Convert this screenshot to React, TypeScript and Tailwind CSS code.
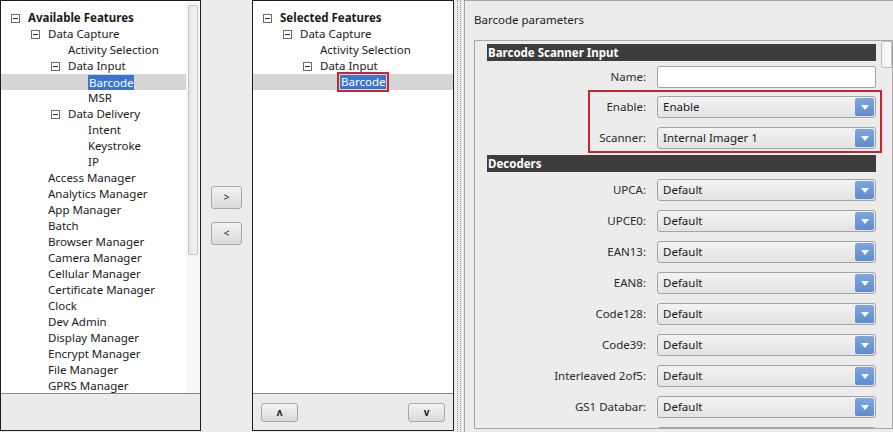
import React from 'react'

type TreeNode = {
  label: string
  level: number
  box?: boolean
  bold?: boolean
  selected?: boolean
}

const indent = ['pl-[10px]', 'pl-[30px]', 'pl-[50px]', 'pl-[70px]']

const availableNodes: TreeNode[] = [
  { label: 'Available Features', level: 0, box: true, bold: true },
  { label: 'Data Capture', level: 1, box: true },
  { label: 'Activity Selection', level: 2 },
  { label: 'Data Input', level: 2, box: true },
  { label: 'Barcode', level: 3, selected: true },
  { label: 'MSR', level: 3 },
  { label: 'Data Delivery', level: 2, box: true },
  { label: 'Intent', level: 3 },
  { label: 'Keystroke', level: 3 },
  { label: 'IP', level: 3 },
  { label: 'Access Manager', level: 1 },
  { label: 'Analytics Manager', level: 1 },
  { label: 'App Manager', level: 1 },
  { label: 'Batch', level: 1 },
  { label: 'Browser Manager', level: 1 },
  { label: 'Camera Manager', level: 1 },
  { label: 'Cellular Manager', level: 1 },
  { label: 'Certificate Manager', level: 1 },
  { label: 'Clock', level: 1 },
  { label: 'Dev Admin', level: 1 },
  { label: 'Display Manager', level: 1 },
  { label: 'Encrypt Manager', level: 1 },
  { label: 'File Manager', level: 1 },
  { label: 'GPRS Manager', level: 1 },
]

const selectedNodes: TreeNode[] = [
  { label: 'Selected Features', level: 0, box: true, bold: true },
  { label: 'Data Capture', level: 1, box: true },
  { label: 'Activity Selection', level: 2 },
  { label: 'Data Input', level: 2, box: true },
  { label: 'Barcode', level: 3, selected: true },
]

const decoders = ['UPCA', 'UPCE0', 'EAN13', 'EAN8', 'Code128', 'Code39', 'Interleaved 2of5', 'GS1 Databar']

function MinusBox() {
  return (
    <span className="w-[9px] h-[9px] mr-[8px] border border-[#6a6a6a] bg-white flex items-center justify-center shrink-0">
      <span className="w-[5px] h-px bg-[#333]" />
    </span>
  )
}

function TreeRow({ node, outlined }: { node: TreeNode; outlined?: boolean }) {
  return (
    <div className={`h-[16px] flex items-center ${indent[node.level]} ${node.selected ? 'bg-[#d6d6d6]' : ''}`}>
      {node.box ? <MinusBox /> : <span className="w-[17px] shrink-0" />}
      {node.selected ? (
        outlined ? (
          <span className="-ml-[3px] border-2 border-[#c3262e] p-px leading-none">
            <span className="bg-[#3b74cf] text-white px-px leading-[14px] block">{node.label}</span>
          </span>
        ) : (
          <span className="bg-[#3b74cf] text-white px-px leading-[15px]">{node.label}</span>
        )
      ) : (
        <span className={node.bold ? 'font-bold' : ''}>{node.label}</span>
      )}
    </div>
  )
}

function SmallButton({ children, className = '' }: { children: React.ReactNode; className?: string }) {
  return (
    <button className={`rounded-[3px] border border-[#a8a8a8] bg-gradient-to-b from-[#f3f3f3] to-[#dadada] text-[#222] flex items-center justify-center ${className}`}>
      {children}
    </button>
  )
}

function Select({ value }: { value: string }) {
  return (
    <div className="flex-1 h-[22px] border border-[#a3a3a3] rounded-[3px] bg-gradient-to-b from-[#f3f3f3] to-[#e3e3e3] flex">
      <div className="flex-1 flex items-center pl-[5px]">{value}</div>
      <div className="w-[19px] my-px mr-px rounded-[2px] bg-gradient-to-b from-[#7ea6df] to-[#5f8ccf] flex items-center justify-center">
        <span className="w-0 h-0 border-l-[4px] border-r-[4px] border-t-[5px] border-l-transparent border-r-transparent border-t-white" />
      </div>
    </div>
  )
}

function FormRow({ label, children, className = '' }: { label: string; children: React.ReactNode; className?: string }) {
  return (
    <div className={`flex items-center h-[22px] ${className}`}>
      <div className="w-[159px] mr-[11px] text-right text-[#2a2a2a]">{label ? `${label}:` : ''}</div>
      {children}
    </div>
  )
}

function SectionHeader({ title, className = '' }: { title: string; className?: string }) {
  return (
    <div className={`h-[17px] bg-[#3d3d3d] text-white font-bold leading-[17px] pl-px ${className}`}>{title}</div>
  )
}

export default function App() {
  return (
    <div
      className="w-[893px] h-[432px] bg-[#ececec] flex overflow-hidden text-[11.5px] text-[#1a1a1a]"
      style={{ fontFamily: '"Noto Sans", "DejaVu Sans", sans-serif' }}
    >
      {/* available features */}
      <div className="w-[201px] h-[431px] border border-[#1e1e1e] flex flex-col shrink-0">
        <div className="flex-1 bg-white flex overflow-hidden">
          <div className="flex-1 pt-[9px]">
            {availableNodes.map((n) => (
              <TreeRow key={n.label + n.level} node={n} />
            ))}
          </div>
          <div className="w-[14px] bg-[#f7f7f7] pt-[4px] px-[2px]">
            <div className="h-[250px] rounded-[2px] border border-[#c4c4c4] bg-gradient-to-r from-[#e6e6e6] to-[#f4f4f4]" />
          </div>
        </div>
        <div className="h-[37px] border-t border-[#8a8a8a] bg-[#ebebeb]" />
      </div>

      {/* move buttons */}
      <div className="w-[51px] shrink-0 flex flex-col items-center pt-[186px] gap-[13px]">
        <SmallButton className="w-[31px] h-[23px] text-[10px]">&gt;</SmallButton>
        <SmallButton className="w-[31px] h-[23px] text-[10px]">&lt;</SmallButton>
      </div>

      {/* selected features */}
      <div className="w-[202px] h-[431px] border border-[#1e1e1e] flex flex-col shrink-0">
        <div className="flex-1 bg-white pt-[9px] overflow-hidden">
          {selectedNodes.map((n) => (
            <TreeRow key={n.label + n.level} node={n} outlined />
          ))}
        </div>
        <div className="h-[37px] border-t border-[#8a8a8a] bg-[#ebebeb] flex justify-between items-start px-[8px] pt-[9px]">
          <SmallButton className="w-[37px] h-[19px] text-[10px] font-bold">ʌ</SmallButton>
          <SmallButton className="w-[37px] h-[19px] text-[10px] font-bold">v</SmallButton>
        </div>
      </div>

      {/* splitter */}
      <div className="w-[10px] shrink-0 flex justify-center">
        <div className="w-[4px] h-full border-x border-dotted border-[#9a9a9a]" />
      </div>

      {/* barcode parameters */}
      <div className="flex-1 border-l border-t border-[#a4a4a4] pl-[9px] pt-[11px] flex flex-col">
        <div className="h-[16px] leading-[16px] text-[#222]">Barcode parameters</div>
        <div className="mt-[12px] h-[389px] border border-[#a7a7a7] flex overflow-hidden">
          <div className="w-[389px] ml-[12px] pt-[3px] shrink-0">
            <SectionHeader title="Barcode Scanner Input" />
            <FormRow label="Name" className="mt-[5px]">
              <div className="flex-1 h-[22px] bg-white border border-[#a3a3a3] rounded-[2px]" />
            </FormRow>
            <div className="relative mt-[8px]">
              <FormRow label="Enable">
                <Select value="Enable" />
              </FormRow>
              <FormRow label="Scanner" className="mt-[9px]">
                <Select value="Internal Imager 1" />
              </FormRow>
              <div className="absolute left-[101px] -right-[6px] -top-[6px] -bottom-[4px] border-2 border-[#c3262e]" />
            </div>
            <SectionHeader title="Decoders" className="mt-[6px]" />
            {decoders.map((d, i) => (
              <FormRow key={d} label={d} className={i === 0 ? 'mt-[7px]' : 'mt-[9px]'}>
                <Select value="Default" />
              </FormRow>
            ))}
            {/* next row, only its top edge shows */}
            <FormRow label="" className="mt-[9px]">
              <Select value="" />
            </FormRow>
          </div>
          <div className="w-[11px] ml-[5px] shrink-0">
            <div className="h-[27px] rounded-[2px] border border-[#bdbdbd] bg-gradient-to-r from-[#f0f0f0] to-[#fafafa]" />
          </div>
        </div>
      </div>
    </div>
  )
}
